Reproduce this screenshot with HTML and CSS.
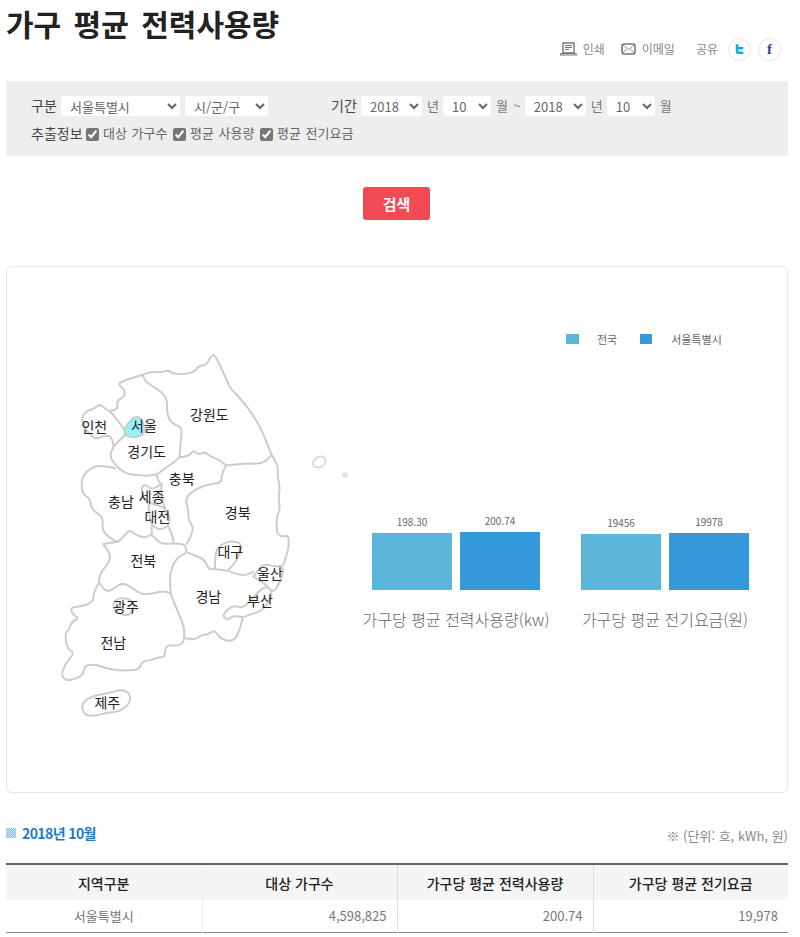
FILE: index.html
```html
<!DOCTYPE html>
<html lang="ko">
<head>
<meta charset="utf-8">
<title>가구 평균 전력사용량</title>
<link rel="stylesheet" href="styles.css">
</head>
<body>
<div class="page">
  <header class="top">
    <h1 class="title">가구 평균 전력사용량</h1>
    <div class="tools">
      <a class="tool">
        <svg class="ico-print" viewBox="0 0 17 14"><path d="M3 1h11v10H3z" fill="#fff" stroke="#777" stroke-width="1.4"/><path d="M5 3.500h7M5 5.500h7M5 7.500h4" stroke="#777" stroke-width="1.100"/><path d="M1 11.500h15l.5 1.500H.5z" fill="#fff" stroke="#777" stroke-width="1.100"/></svg>
        <span>인쇄</span>
      </a>
      <a class="tool">
        <svg class="ico-mail" viewBox="0 0 15 12"><rect x="1" y="1" width="13" height="10" rx="2" fill="#fff" stroke="#777" stroke-width="1.600"/><path d="M2 2l5.500 4.500L13 2M2 10l4-4.500M13 10L9 5.500" fill="none" stroke="#999" stroke-width="1"/></svg>
        <span>이메일</span>
      </a>
      <span class="share">공유</span>
      <a class="sns"><svg viewBox="0 0 12 14" class="ico-tw"><path d="M1 0h3.500v3.500H11V7H4.500v2.500H11V13H4Q1 13 1 10z" fill="#14a9e8"/></svg></a>
      <a class="sns fb">f</a>
    </div>
  </header>

  <form class="filter">
    <div class="filter-row">
      <label class="lbl lbl-gubun">구분</label>
      <select class="sel sel-city"><option>서울특별시</option></select>
      <select class="sel sel-gu"><option>시/군/구</option></select>
      <label class="lbl lbl-period">기간</label>
      <select class="sel sel-year"><option>2018</option></select>
      <span class="unit">년</span>
      <select class="sel sel-month"><option>10</option></select>
      <span class="unit unit-range">월 ~</span>
      <select class="sel sel-year"><option>2018</option></select>
      <span class="unit">년</span>
      <select class="sel sel-month"><option>10</option></select>
      <span class="unit">월</span>
    </div>
    <div class="filter-row row-check">
      <label class="lbl lbl-extract">추출정보</label>
      <input type="checkbox" class="chk" checked id="c1"><label for="c1" class="chk-l">대상 가구수</label>
      <input type="checkbox" class="chk" checked id="c2"><label for="c2" class="chk-l">평균 사용량</label>
      <input type="checkbox" class="chk" checked id="c3"><label for="c3" class="chk-l">평균 전기요금</label>
    </div>
  </form>

  <div class="search-wrap"><button type="button" class="search">검색</button></div>

  <section class="card">
    <svg class="map" viewBox="0 0 930 1170">
      <g class="regions">
        <path class="seoul" d="M222 268Q235 248 248 235Q262 226 270 235Q278 243 288 268Q282 284 270 288Q245 297 225 285Z"/>
        <path d="M278 105L289 100Q300 95 315 96Q330 98 342 94Q355 90 362 96Q370 102 390 102Q410 102 422 98Q435 95 440 86Q445 78 458 76Q470 75 476 62Q482 48 488 46Q495 45 502 60Q510 75 520 98Q530 120 535 132Q540 145 558 162Q575 180 592 202Q610 225 625 252Q640 280 665 345"/>
        <path d="M278 105Q285 125 298 132Q310 140 322 148Q335 155 344 168Q352 180 351 198Q350 215 355 230Q360 245 372 252Q385 258 390 262Q395 265 394 288Q392 310 388 352"/>
        <path d="M388 352Q415 350 422 340Q430 330 438 338Q445 345 455 340Q465 335 475 344Q485 352 498 356Q510 360 519 369Q528 378 544 375Q560 372 580 371Q600 370 612 371Q625 372 638 367Q650 362 665 345"/>
        <path d="M278 105L266 108Q255 112 240 116Q225 120 214 126Q203 132 214 141Q225 150 224 161Q222 172 211 177Q200 182 202 194Q205 205 192 210Q180 215 172 210Q165 205 156 198Q148 192 139 200Q130 207 120 210Q110 212 102 222Q95 232 98 244Q100 255 105 264Q110 272 122 285Q135 298 145 294Q155 290 165 288Q175 285 182 292Q188 300 190 311Q192 322 185 334Q178 345 186 360Q195 375 210 388Q225 400 238 402Q250 405 268 406Q285 408 302 406Q320 405 332 395Q345 385 360 375Q375 365 388 352"/>
        <path d="M180 215Q200 235 222 268M225 285L192 318"/>
        <path d="M320 405Q325 425 330 428Q335 432 320 441Q305 450 298 442Q290 435 282 436Q275 438 276 454Q278 470 286 480Q295 490 310 492Q325 495 335 500Q345 505 352 518Q360 530 358 545Q355 560 340 565Q325 570 315 562Q305 555 301 540Q297 525 296 490M305 558L305 582"/>
        <path d="M195 385Q150 375 135 380Q120 385 108 398Q95 410 95 435Q95 460 108 468Q120 475 122 492Q125 510 142 520Q160 530 158 550Q155 570 170 585Q185 600 205 605"/>
        <path d="M335 432Q330 465 345 505"/>
        <path d="M528 378Q515 400 515 414Q515 428 500 430Q485 432 462 438Q440 445 422 460Q405 475 410 492Q415 510 415 525Q415 540 425 555Q435 570 410 612"/>
        <path d="M355 560Q365 575 372 610"/>
        <path d="M160 612L205 605Q225 585 232 578Q240 570 245 575Q250 580 268 588Q285 595 295 588Q305 582 312 591Q320 600 328 606Q335 612 352 611Q370 610 388 611Q405 612 408 625Q412 638 398 644Q385 650 375 665Q365 680 362 700Q358 720 362 760"/>
        <path d="M160 612Q180 640 180 652Q180 665 165 682Q150 700 148 715Q145 730 160 745Q175 760 192 745Q210 730 222 732Q235 735 255 750Q275 765 292 762Q310 760 328 756Q345 752 362 760"/>
        <path d="M145 730Q130 760 130 772Q130 785 115 792Q100 798 81 800Q62 802 64 811Q65 820 76 828Q88 835 76 840Q65 845 62 855Q60 865 52 872Q45 880 48 902Q50 925 62 932Q75 938 62 952Q50 965 41 985Q32 1005 41 1014Q50 1022 60 1020Q70 1018 85 1012Q100 1005 101 992Q102 978 118 975Q135 972 158 981Q180 990 208 991Q235 992 252 990Q268 988 272 976Q275 965 290 962Q305 960 315 956Q325 952 335 952Q345 952 345 934Q345 915 365 916Q385 918 394 912Q403 905 403 882Q403 860 394 840Q385 820 362 760"/>
        <path d="M205 776Q215 773 230 776Q245 780 250 792Q255 805 245 816Q235 828 220 824Q205 820 196 811Q187 802 191 791Q195 780 205 776Z"/>
        <path d="M412 638Q440 648 452 654Q465 660 470 674Q475 688 485 688L495 688Q530 690 548 698Q565 705 578 705Q590 705 600 700L610 695"/>
        <path d="M403 895Q440 900 445 892Q450 885 460 885Q470 885 482 878Q495 870 502 882Q510 895 525 900Q540 905 552 898Q565 890 578 835"/>
        <path d="M578 832Q610 820 625 815Q640 810 655 785Q670 760 660 748Q650 735 635 748Q620 760 610 772Q600 785 588 795Q575 805 562 800Q550 795 532 810Q515 825 524 834Q532 842 541 834Q550 825 578 832"/>
        <path d="M610 710Q630 680 640 676Q650 672 662 676Q675 680 688 678Q700 675 698 698Q695 720 682 740Q670 760 660 748Q650 735 630 722Z"/>
        <path d="M495 688Q495 640 502 628Q510 615 528 608Q545 602 560 606Q575 610 572 625Q570 640 562 655Q555 670 535 690"/>
        <path d="M665 345Q685 375 684 392Q682 410 686 425Q690 440 688 455Q685 470 688 490Q690 510 685 520Q680 530 680 550Q680 570 682 578Q685 585 692 588Q700 590 708 588Q715 585 716 602Q718 620 709 648L700 675"/>
        <path d="M110 1079Q125 1068 150 1064Q175 1060 195 1054Q215 1047 228 1054Q240 1060 240 1075Q240 1090 225 1102Q210 1115 190 1116Q170 1118 148 1124Q125 1130 112 1125Q100 1120 97 1105Q95 1090 110 1079Z"/>
        <ellipse class="isle" cx="808" cy="366" rx="20" ry="15" transform="rotate(-30 808 366)"/>
        <circle class="isle" cx="885" cy="405" r="5"/>
      </g>
      <g class="map-labels">
        <text x="133" y="275">인천</text>
        <text x="282" y="273">서울</text>
        <text x="478" y="240">강원도</text>
        <text x="290" y="350">경기도</text>
        <text x="395" y="433">충북</text>
        <text x="213" y="502">충남</text>
        <text x="305" y="487">세종</text>
        <text x="322" y="547">대전</text>
        <text x="563" y="535">경북</text>
        <text x="541" y="651">대구</text>
        <text x="280" y="678">전북</text>
        <text x="660" y="718">울산</text>
        <text x="630" y="798">부산</text>
        <text x="475" y="785">경남</text>
        <text x="228" y="815">광주</text>
        <text x="190" y="924">전남</text>
        <text x="172" y="1103">제주</text>
      </g>
    </svg>
    <div class="chart">
      <div class="legend">
        <i class="sw sw-a"></i><span class="lg-a">전국</span>
        <i class="sw sw-b"></i><span>서울특별시</span>
      </div>
      <div class="groups">
        <div class="group">
          <div class="bars">
            <div class="bar-col"><span>198.30</span><div class="bar bar-a h57"></div></div>
            <div class="bar-col"><span>200.74</span><div class="bar bar-b h58"></div></div>
          </div>
          <p class="g-title">가구당 평균 전력사용량(kw)</p>
        </div>
        <div class="group">
          <div class="bars">
            <div class="bar-col"><span>19456</span><div class="bar bar-a h56"></div></div>
            <div class="bar-col"><span>19978</span><div class="bar bar-b h57"></div></div>
          </div>
          <p class="g-title">가구당 평균 전기요금(원)</p>
        </div>
      </div>
    </div>
  </section>

  <div class="sec-head">
    <h2 class="sec-title">2018년 10월</h2>
    <span class="sec-unit">※ (단위: 호, kWh, 원)</span>
  </div>

  <table class="data">
    <thead>
      <tr><th>지역구분</th><th>대상 가구수</th><th>가구당 평균 전력사용량</th><th>가구당 평균 전기요금</th></tr>
    </thead>
    <tbody>
      <tr><td class="c">서울특별시</td><td>4,598,825</td><td>200.74</td><td>19,978</td></tr>
    </tbody>
  </table>
</div>
</body>
</html>
```
FILE: styles.css
```css
* { box-sizing: border-box; }
html, body { margin: 0; padding: 0; background: #fff; }
body { font-family: "Noto Sans CJK KR", "Noto Sans", sans-serif; color: #555; font-size: 13px; overflow: hidden; }
.page { width: 782px; margin-left: 6px; height: 937px; }

.top { display: flex; justify-content: space-between; height: 81px; }
.title { margin: 0; font-size: 30px; line-height: 40px; padding: 3px 0 0 0; font-weight: 700; color: #222; word-spacing: 4px; }
.tools { display: flex; align-items: center; height: 24px; margin-top: 36px; padding-right: 7px; font-size: 12px; color: #888; }
.tool { display: flex; align-items: center; gap: 6px; margin-right: 16px; }
.ico-print { width: 17px; height: 14px; margin-top: 1px; }
.ico-mail { width: 15px; height: 12px; margin-top: 1px; }
.share { margin: 0 10px 0 5px; }
.sns { width: 23px; height: 23px; border: 1px solid #e6e6e6; border-radius: 50%; display: flex; align-items: center; justify-content: center; background: #fff; margin-top: 2px; }
.sns + .sns { margin-left: 7px; }
.ico-tw { width: 9px; height: 11px; }
.fb { font: 700 15px "Liberation Serif", serif; color: #2f4a80; }

.filter { height: 75px; background: #eee; padding: 15px 0 0 25px; }
.filter-row { display: flex; align-items: center; height: 20px; }
.row-check { margin-top: 7px; height: 22px; }
.lbl { font-size: 14px; color: #444; padding-bottom: 3px; white-space: nowrap; }
.lbl-gubun { width: 30px; }
.lbl-period { margin-left: 63px; width: 30px; }
.lbl-extract { width: 51px; }
.sel { height: 20px; border: 0; border-radius: 3px; background-color: #fff; font-family: inherit; font-size: 13px; color: #666; padding: 0 0 0 5px; }
.sel-city { width: 119px; margin-right: 5px; }
.sel-gu { width: 83px; }
.sel-year { width: 61px; }
.sel-month { width: 48px; }
.unit { font-size: 13px; color: #777; margin: 0 4px 0 5px; padding-bottom: 2px; white-space: nowrap; }
.unit-range { word-spacing: 2px; }
.chk { width: 13px; height: 13px; margin: 0 4px; accent-color: #767676; }
.chk-l { font-size: 13px; color: #666; width: 65px; white-space: nowrap; word-spacing: 1px; padding-bottom: 3px; }
.chk-l + .chk { margin-left: 5px; }

.search-wrap { display: flex; justify-content: center; padding: 31px 1px 0 0; height: 110px; }
.search { width: 67px; height: 33px; border: 0; border-radius: 3px; background: #f24b55; color: #fff; font-family: inherit; font-size: 15px; font-weight: 700; padding: 0; }

.card { height: 527px; border: 1px solid #e6e6e6; border-radius: 6px; display: flex; padding: 73px 0 0 43px; }
.map { width: 310px; height: 390px; flex: none; }
.regions path, .regions .isle { fill: none; stroke: #ccc; stroke-width: 6; stroke-linejoin: round; stroke-linecap: round; }
.regions .seoul { fill: #96f0ff; stroke: #ccc; }
.regions .isle { stroke: #ddd; }
.map-labels text { font-size: 42px; fill: #222; text-anchor: middle; }

.chart { flex: 1; display: flex; flex-direction: column; }
.legend { display: flex; align-items: center; height: 12px; margin: -7px 0 0 206px; font-size: 11px; color: #666; }
.sw { width: 13px; height: 10px; margin-right: 18px; }
.sw-a { background: #5bb6d9; }
.sw-b { width: 12px; background: #3498db; margin-right: 19px; }
.lg-a { margin-right: 23px; }
.groups { display: flex; gap: 41px; margin: 173px 0 0 12px; }
.group { width: 168px; display: flex; flex-direction: column; align-items: center; }
.bars { display: flex; gap: 8px; align-items: flex-end; height: 72px; }
.bar-col { width: 80px; display: flex; flex-direction: column; align-items: center; }
.bar-col span { font-size: 10px; line-height: 14px; color: #666; margin-bottom: 4px; }
.bar { width: 100%; }
.bar-a { background: #5bb6d9; }
.bar-b { background: #3498db; }
.h56 { height: 56px; }
.h57 { height: 57px; }
.h58 { height: 58px; }
.g-title { margin: 18px 0 0; font-size: 16px; line-height: 22px; white-space: nowrap; color: #666; font-weight: 300; }

.sec-head { display: flex; justify-content: space-between; height: 70px; padding-top: 29px; }
.sec-title { margin: 0; font-size: 14px; line-height: 22px; height: 22px; font-weight: 700; color: #1f7ac9; display: flex; align-items: center; gap: 6px; letter-spacing: -0.6px; }
.sec-title::before { content: ""; width: 10px; height: 10px; background: repeating-conic-gradient(#7dbdee 0 25%, #cfe6f8 0 50%) 0 0 / 2px 2px; }
.sec-unit { font-size: 13px; color: #888; line-height: 18px; padding-top: 5px; }

.data { width: 782px; border-collapse: collapse; table-layout: fixed; border-top: 2px solid #666; border-bottom: 1px solid #888; }
.data th { height: 36px; background: #f5f5f5; font-size: 14px; font-weight: 500; color: #222; padding: 0; border-left: 1px solid #eee; width: 195px; }
.data th:nth-child(odd) { width: 196px; }
.data td { height: 32px; font-size: 13px; color: #777; text-align: right; padding: 0 10px; border-left: 1px solid #eee; }
.data th:first-child, .data td:first-child { border-left: 0; }
.data th:nth-child(3), .data td:nth-child(3), .data th:nth-child(4), .data td:nth-child(4) { border-left-color: #ddd; }
.data td.c { text-align: center; }
```
